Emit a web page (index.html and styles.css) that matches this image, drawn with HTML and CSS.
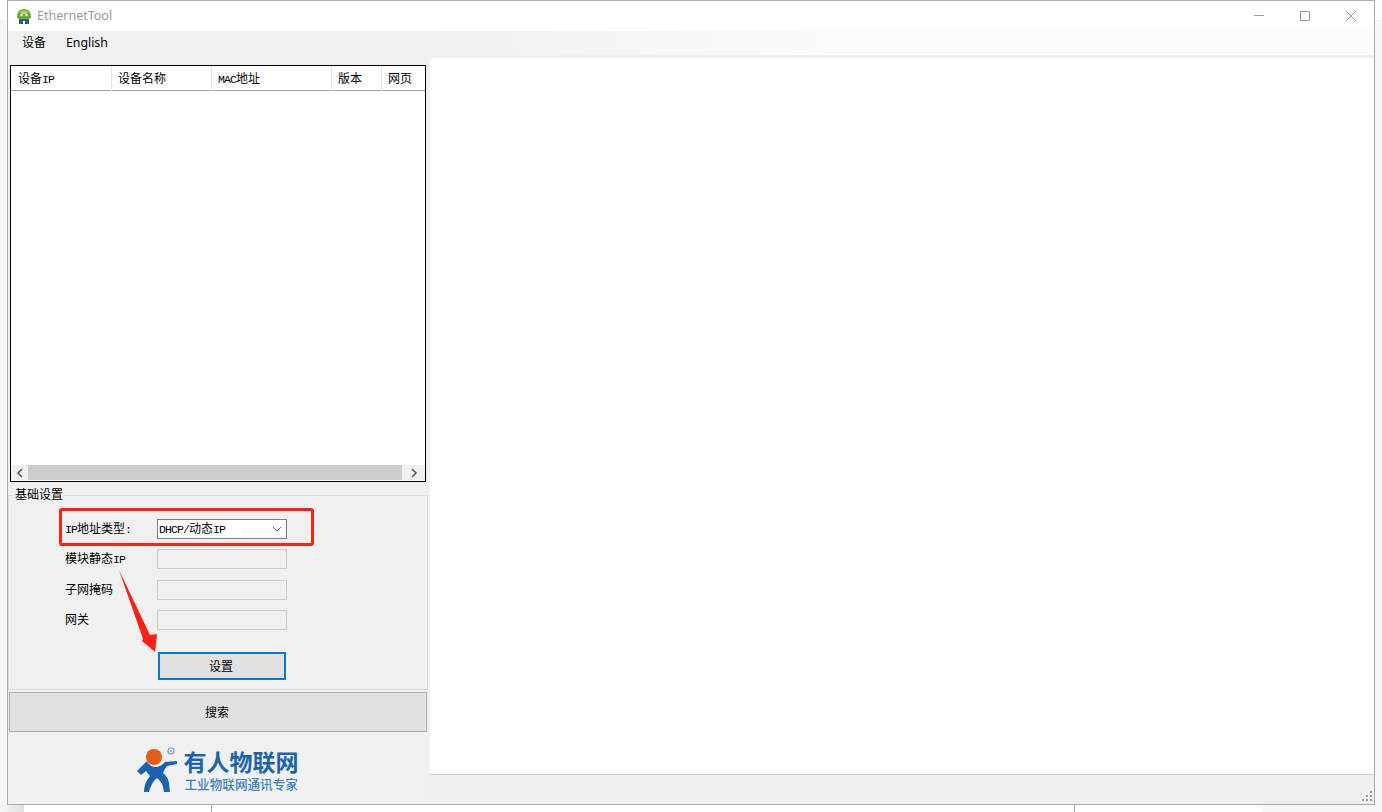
FILE: index.html
```html
<!DOCTYPE html>
<html lang="zh">
<head>
    <meta charset="UTF-8">
    <title>EthernetTool</title>
    <link rel="stylesheet" href="styles.css">
</head>
<body>

    <div class="window">
        <!-- Title bar -->
        <div class="titlebar">
            <svg class="app-icon" width="16" height="16" viewBox="0 0 16 16">
                <path d="M1 9 Q1 1 8 1 Q15 1 15 9 Q15 11 12 11 L4 11 Q1 11 1 9 Z" fill="#6fae2e"/>
                <path d="M4 4 Q8 1 12 4 L11 6 L5 6 Z" fill="#a8d65c"/>
                <circle cx="5.5" cy="7" r="1.3" fill="#e8f3d0"/>
                <circle cx="10.5" cy="7" r="1.3" fill="#e8f3d0"/>
                <path d="M3 11 L13 11 L13 16 L9 16 L9 13 L7 13 L7 16 L3 16 Z" fill="#2c5c9c"/>
            </svg>
            <span class="app-name">EthernetTool</span>
            <div class="win-buttons">
                <div class="win-btn">
                    <svg width="12" height="12" viewBox="0 0 12 12"><path d="M1 5.5H11" stroke="#999" fill="none"/></svg>
                </div>
                <div class="win-btn">
                    <svg width="12" height="12" viewBox="0 0 12 12"><rect x="1.5" y="1.5" width="9" height="9" stroke="#999" fill="none"/></svg>
                </div>
                <div class="win-btn">
                    <svg width="12" height="12" viewBox="0 0 12 12"><path d="M1 1L11 11M11 1L1 11" stroke="#999" fill="none"/></svg>
                </div>
            </div>
        </div>

        <!-- Menu -->
        <div class="menubar">
            <span class="menu-item">设备</span>
            <span class="menu-item menu-en">English</span>
        </div>
        <div class="menu-strip"></div>

        <div class="main">
            <!-- Left panel -->
            <div class="left-panel">
                <div class="device-list">
                    <div class="list-head">
                        <div class="head-cell">设备<span class="en">IP</span></div>
                        <div class="head-cell">设备名称</div>
                        <div class="head-cell"><span class="en">MAC</span>地址</div>
                        <div class="head-cell">版本</div>
                        <div class="head-cell no-line">网页</div>
                    </div>
                    <div class="list-body"></div>
                    <div class="hscroll">
                        <div class="scroll-btn">
                            <svg width="8" height="10" viewBox="0 0 8 10"><path d="M6 1L2 5L6 9" stroke="#555" stroke-width="1.5" fill="none"/></svg>
                        </div>
                        <div class="scroll-thumb"></div>
                        <div class="scroll-btn">
                            <svg width="8" height="10" viewBox="0 0 8 10"><path d="M2 1L6 5L2 9" stroke="#555" stroke-width="1.5" fill="none"/></svg>
                        </div>
                    </div>
                </div>

                <fieldset class="settings">
                    <legend>基础设置</legend>
                    <div class="form-rows">
                        <div class="form-row">
                            <label><span class="en">IP</span>地址类型<span class="en">:</span></label>
                            <div class="dropdown">
                                <span class="dropdown-value"><span class="en">DHCP/</span>动态<span class="en">IP</span></span>
                                <svg width="10" height="6" viewBox="0 0 10 6"><path d="M1 1L5 5L9 1" stroke="#666" fill="none"/></svg>
                            </div>
                        </div>
                        <div class="form-row">
                            <label>模块静态<span class="en">IP</span></label>
                            <div class="text-box"></div>
                        </div>
                        <div class="form-row">
                            <label>子网掩码</label>
                            <div class="text-box"></div>
                        </div>
                        <div class="form-row">
                            <label>网关</label>
                            <div class="text-box"></div>
                        </div>
                    </div>
                    <button class="set-button">设置</button>
                </fieldset>

                <button class="search-button">搜索</button>

                <!-- Logo -->
                <div class="logo">
                    <svg class="logo-mark" width="44" height="48" viewBox="0 0 44 48">
                        <path d="M1 26L11 16Q14 22 19 22Q25 22 29 17L41 16L41 19L31 21Q28 25 27 28Q32 32 33 38L34 47L28 47Q27 37 21 33Q15 38 13 47L8 47Q8 38 14 31Q11 28 10 26L5 30Z" fill="#1a64ad"/>
                        <circle cx="18" cy="12" r="8" fill="#ea5a14"/>
                        <circle cx="35" cy="6" r="3" stroke="#6f9ccb" stroke-width="1.2" fill="none"/>
                        <circle cx="35" cy="6" r="1" fill="#6f9ccb"/>
                    </svg>
                    <div class="logo-text">
                        <div class="logo-name">有人物联网</div>
                        <div class="logo-sub">工业物联网通讯专家</div>
                    </div>
                </div>
            </div>

            <!-- Right side -->
            <div class="right-panel">
                <div class="content"></div>
                <div class="statusbar">
                    <svg width="10" height="10" viewBox="0 0 10 10">
                        <path d="M8 0h2v2H8zM4 4h2v2H4zM8 4h2v2H8zM0 8h2v2H0zM4 8h2v2H4zM8 8h2v2H8z" fill="#999"/>
                    </svg>
                </div>
            </div>
        </div>
    </div>

    <!-- Screenshot annotations -->
    <div class="red-box"></div>
    <svg class="red-arrow" width="42" height="86" viewBox="0 0 42 86">
        <path d="M2 1L33 66L40 65L38 83L25 72L26 70Z" fill="#ff2015"/>
    </svg>

    <div class="below">
        <div class="below-page">
            <div class="below-col first"></div>
            <div class="below-col second"></div>
        </div>
    </div>

</body>
</html>
```

FILE: styles.css
```css
/* General */
html, body {
    margin: 0;
    padding: 0;
    height: 812px;
    overflow: hidden;
}
body {
    position: relative;
    font-family: "Noto Sans CJK SC", sans-serif;
    font-size: 12px;
    color: #000;
    background: linear-gradient(#fff 20px, #f5f6f8 20px);
}
/* latin text in the old bitmap font is 6px per letter */
.en {
    font-family: "Liberation Mono", monospace;
    font-size: 11.5px;
    letter-spacing: -0.9px;
}

/* Window frame */
.window {
    box-sizing: border-box;
    display: flex;
    flex-direction: column;
    width: 1368px;
    height: 805px;
    margin-left: 7px;
    border: 1px solid #aaa;
    background: #fff;
}

/* Title bar */
.titlebar {
    display: flex;
    align-items: center;
    height: 30px;
    padding-left: 8px;
    flex: none;
}
.app-icon {
    margin-right: 5px;
}
.app-name {
    font-family: "Noto Sans", sans-serif;
    font-size: 12.5px;
    line-height: 14px;
    color: #999;
}
.win-buttons {
    display: flex;
    margin-left: auto;
}
.win-btn {
    display: flex;
    align-items: center;
    justify-content: center;
    width: 46px;
    height: 30px;
}

/* Menu */
.menubar {
    box-sizing: border-box;
    display: flex;
    align-items: center;
    height: 24px;
    padding: 0 0 2px 14px;
    gap: 20px;
    flex: none;
    background: linear-gradient(90deg, #f0f0f0, #f0f0f0 30%, #fafafa 60%);
}
.menu-item {
    padding-bottom: 2px;
}
.menu-en {
    padding-bottom: 0;
    font-family: "Noto Sans", sans-serif;
    font-size: 12.3px;
}
.menu-strip {
    height: 3px;
    flex: none;
    background: #f0f0f0;
}

/* Main area */
.main {
    display: flex;
    flex: 1;
    min-height: 0;
}
.left-panel {
    box-sizing: border-box;
    display: flex;
    flex-direction: column;
    width: 422px;
    padding-top: 7px;
    background: #f0f0f0;
}
.right-panel {
    display: flex;
    flex-direction: column;
    flex: 1;
}
.content {
    flex: 1;
    background: #fff;
}
.statusbar {
    box-sizing: border-box;
    display: flex;
    justify-content: flex-end;
    align-items: flex-end;
    height: 30px;
    padding: 0 2px 3px 0;
    border-top: 1px solid #ccc;
    background: #efefef;
}

/* Device list */
.device-list {
    box-sizing: border-box;
    display: flex;
    flex-direction: column;
    width: 416px;
    height: 417px;
    margin-left: 2px;
    border: 1px solid #000;
    background: #fff;
}
.list-head {
    display: grid;
    grid-template-columns: 100px 100px 120px 50px 1fr;
    height: 24px;
    padding-left: 1px;
    border-bottom: 1px solid #a0a0a0;
}
.head-cell {
    padding-left: 6px;
    line-height: 24px;
    border-right: 1px solid #e5e5e5;
}
.head-cell.no-line {
    border-right: none;
}
.list-body {
    flex: 1;
}
.hscroll {
    display: flex;
    height: 15px;
    margin-bottom: 1px;
    background: #f0f0f0;
}
.scroll-btn {
    display: flex;
    align-items: center;
    justify-content: center;
    width: 17px;
    background: #f0f0f0;
}
.scroll-btn:last-child {
    width: 23px;
}
.scroll-thumb {
    flex: 1;
    background: #cdcdcd;
}

/* Basic settings */
.settings {
    box-sizing: border-box;
    width: 420px;
    height: 203px;
    margin: 5px 0 0;
    padding: 15px 0 0;
    border: 1px solid #dcdcdc;
    min-width: 0;
}
.settings legend {
    padding: 0;
    margin-left: 6px;
    line-height: 13px;
    height: 17px;
}
.form-rows {
    display: flex;
    flex-direction: column;
    gap: 10.4px;
    padding-left: 56px;
}
.form-row {
    display: flex;
    align-items: center;
    height: 20px;
}
.form-row label {
    width: 92px;
    padding-bottom: 3px;
}
.dropdown, .text-box {
    box-sizing: border-box;
    width: 130px;
    height: 20px;
}
.dropdown {
    display: flex;
    align-items: center;
    justify-content: space-between;
    padding: 0 4px 0 1px;
    border: 1px solid #7a7a7a;
    background: #fff;
}
.dropdown-value {
    padding-bottom: 4px;
}
.text-box {
    border: 1px solid #ccc;
    background: #f0f0f0;
}
.set-button {
    box-sizing: border-box;
    display: block;
    width: 128px;
    height: 28px;
    margin: 22px 0 0 149px;
    padding: 0 2px 2px 0;
    border: 2px solid #0078d7;
    background: #e1e1e1;
    font: inherit;
    color: #000;
}
.search-button {
    box-sizing: border-box;
    width: 418px;
    height: 40px;
    margin: 2px 0 0 1px;
    padding: 0 2px 2px 0;
    border: 1px solid #adadad;
    background: #e1e1e1;
    font: inherit;
    color: #000;
}

/* Logo */
.logo {
    display: flex;
    align-items: flex-start;
    justify-content: center;
    gap: 4px;
    margin-top: 13px;
    padding-right: 4px;
    background: #f0f0f0;
}
.logo-text {
    padding-top: 2px;
}
.logo-name {
    font-size: 23px;
    font-weight: 700;
    line-height: 28px;
    color: #1a64ad;
}
.logo-sub {
    margin: 1px 0 0 1px;
    font-size: 12.6px;
    font-weight: 500;
    line-height: 16px;
    white-space: nowrap;
    color: #3b82c4;
}

/* Red annotations */
.red-box {
    position: absolute;
    left: 59px;
    top: 508px;
    width: 249px;
    height: 32px;
    border: 3px solid #ff2015;
    border-radius: 3px;
}
.red-arrow {
    position: absolute;
    left: 117px;
    top: 569px;
}

/* What shows below the window */
.below {
    height: 7px;
    background: linear-gradient(90deg, #f5f6f8, #dfe0e2);
    width: 24px;
}
.below-page {
    display: flex;
    width: 1238px;
    height: 7px;
    margin-left: 24px;
    background: #fff;
}
.below-col {
    height: 7px;
    border-right: 1px solid #aaa;
}
.below-col.first {
    width: 187px;
}
.below-col.second {
    width: 862px;
}
```
